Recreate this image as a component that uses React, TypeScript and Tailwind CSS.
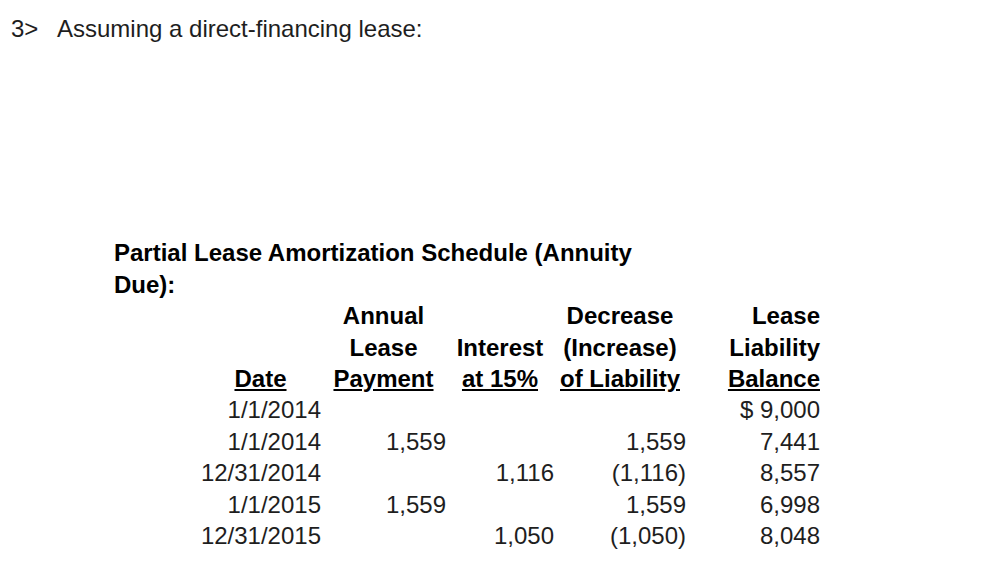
import React from "react";

const header: { lines: string[]; align: "center" | "right" }[] = [
  { lines: ["", "", "Date"], align: "center" },
  { lines: ["Annual", "Lease", "Payment"], align: "center" },
  { lines: ["", "Interest", "at 15%"], align: "center" },
  { lines: ["Decrease", "(Increase)", "of Liability"], align: "center" },
  { lines: ["Lease", "Liability", "Balance"], align: "right" },
];

const rows = [
  ["1/1/2014", "", "", "", "$ 9,000"],
  ["1/1/2014", "1,559", "", "1,559", "7,441"],
  ["12/31/2014", "", "1,116", "(1,116)", "8,557"],
  ["1/1/2015", "1,559", "", "1,559", "6,998"],
  ["12/31/2015", "", "1,050", "(1,050)", "8,048"],
];

const App: React.FC = () => {
  return (
    <div className="min-h-screen bg-white font-['Liberation_Sans',Arial,sans-serif] text-[24px] leading-[31.4px] text-[#1e1e1e]">
      <div className="flex pl-[11px] pt-[13px]">
        <span className="w-[46px]">3&gt;</span>
        <span>Assuming a direct-financing lease:</span>
      </div>

      <div className="ml-[114px] mt-[193px]">
        <div className="w-[540px] font-bold text-black">
          Partial Lease Amortization Schedule (Annuity Due):
        </div>

        <div className="ml-[86px] grid grid-cols-[121px_125px_108px_132px_134px]">
          {header.map((col, i) => (
            <div
              key={i}
              className={
                col.align === "right"
                  ? "text-right font-bold text-black"
                  : "text-center font-bold text-black"
              }
            >
              {col.lines.map((line, j) => (
                <div key={j} className="h-[31.4px]">
                  {j === col.lines.length - 1 ? (
                    <span className="underline">{line}</span>
                  ) : (
                    line
                  )}
                </div>
              ))}
            </div>
          ))}

          {rows.map((row, r) =>
            row.map((cell, c) => (
              <div key={`${r}-${c}`} className="h-[31.4px] text-right">
                {cell}
              </div>
            ))
          )}
        </div>
      </div>
    </div>
  );
};

export default App;
